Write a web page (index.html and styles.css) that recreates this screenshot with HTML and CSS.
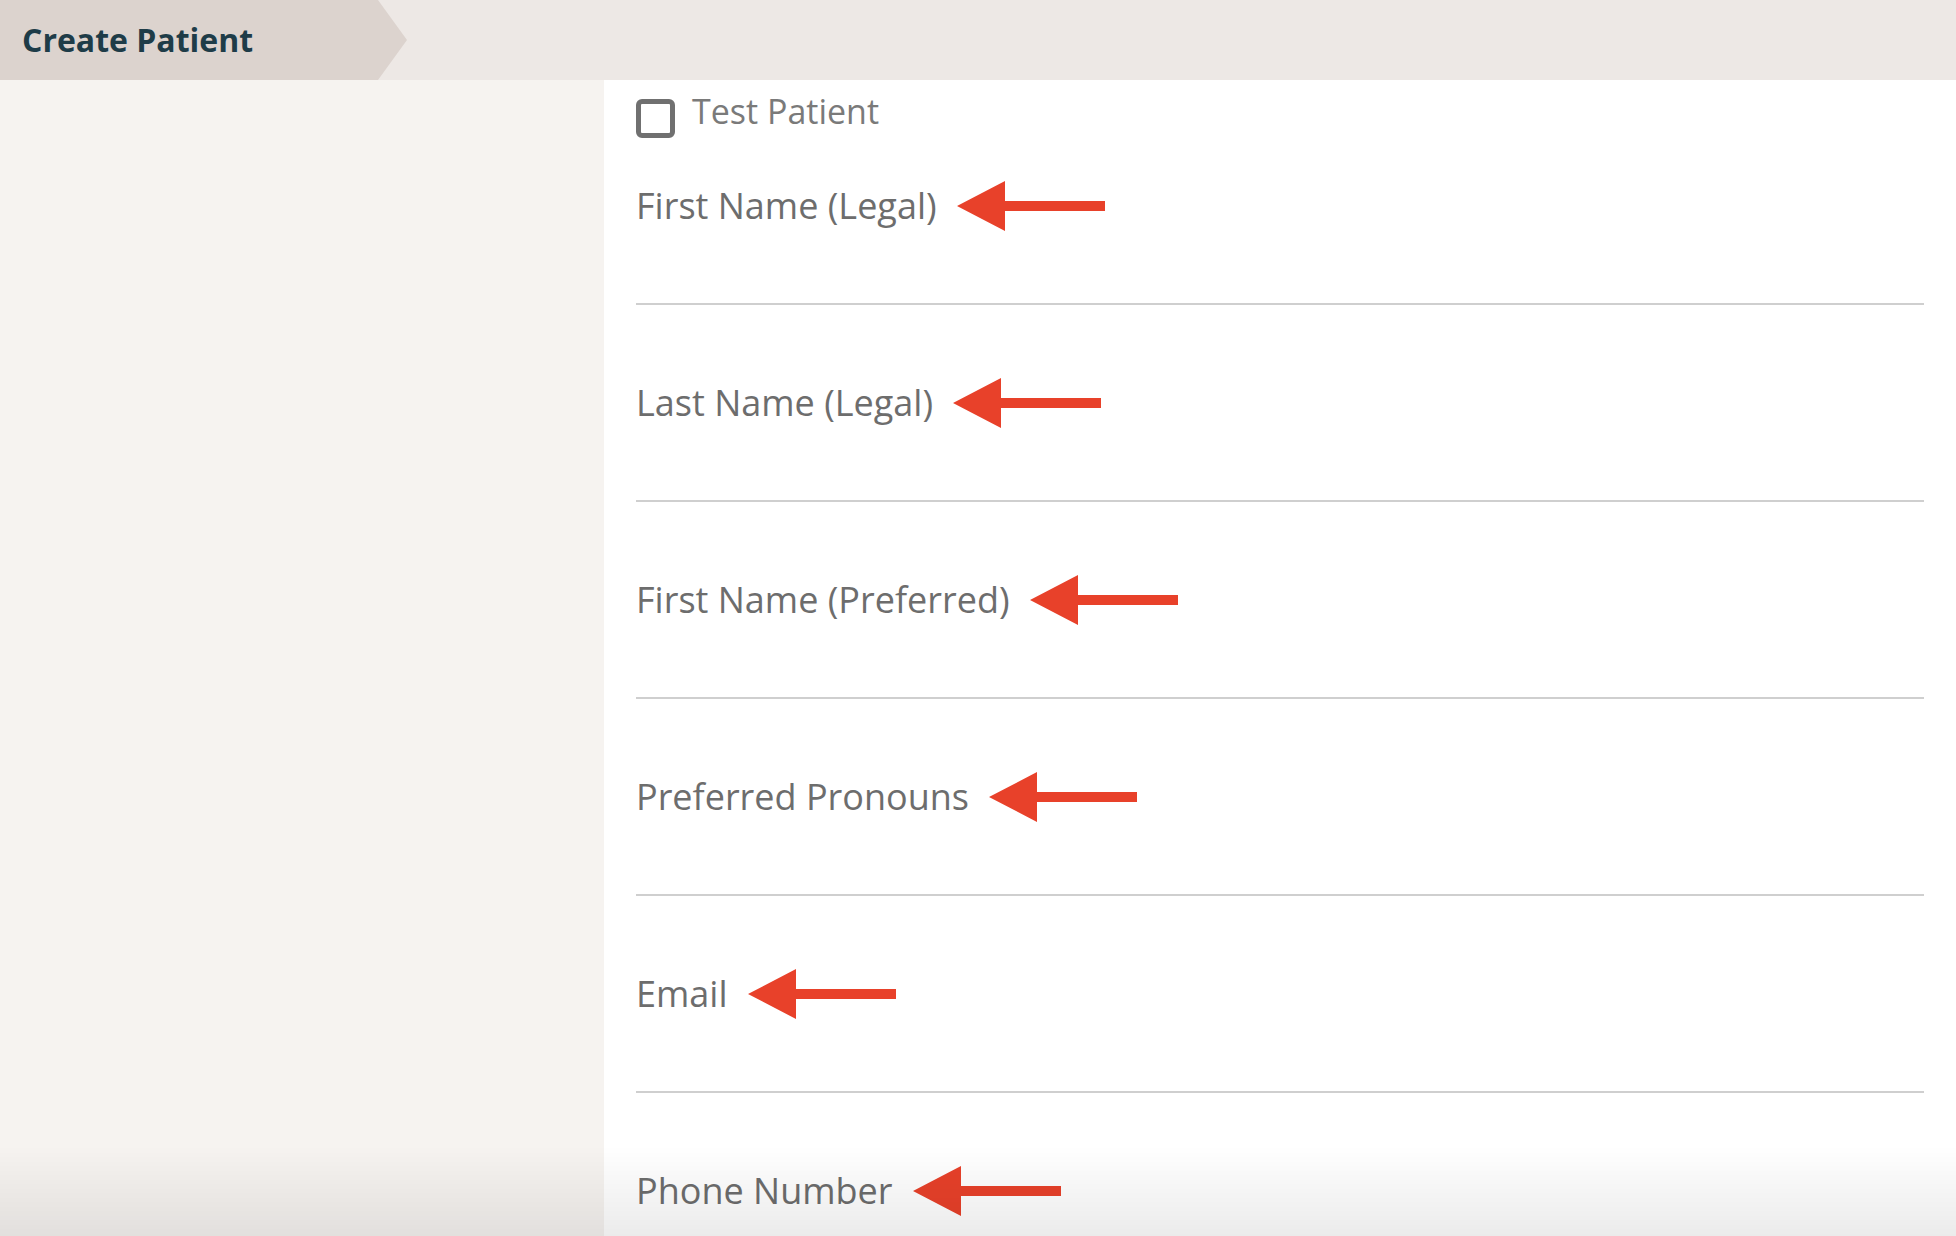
FILE: index.html
```html
<!DOCTYPE html>
<html lang="en">
<head>
    <meta charset="UTF-8">
    <meta name="viewport" content="width=device-width, initial-scale=1.0">
    <title>Create Patient</title>
    <link rel="stylesheet" href="styles.css">
</head>
<body>
    <div class="topbar">
        <div class="crumb">Create Patient</div>
    </div>
    <div class="page">
        <aside class="sidebar"></aside>
        <main class="main">
            <label class="check-row">
                <span class="checkbox"></span>
                <span class="check-text">Test Patient</span>
            </label>
            <div class="field">
                <div class="label">First Name (Legal)
                    <svg class="arrow" width="148" height="50" viewBox="0 0 148 50"><polygon points="0,25 48,0 48,20 148,20 148,30 48,30 48,50"/></svg>
                </div>
                <div class="input"></div>
            </div>
            <div class="field">
                <div class="label">Last Name (Legal)
                    <svg class="arrow" width="148" height="50" viewBox="0 0 148 50"><polygon points="0,25 48,0 48,20 148,20 148,30 48,30 48,50"/></svg>
                </div>
                <div class="input"></div>
            </div>
            <div class="field">
                <div class="label">First Name (Preferred)
                    <svg class="arrow" width="148" height="50" viewBox="0 0 148 50"><polygon points="0,25 48,0 48,20 148,20 148,30 48,30 48,50"/></svg>
                </div>
                <div class="input"></div>
            </div>
            <div class="field">
                <div class="label">Preferred Pronouns
                    <svg class="arrow" width="148" height="50" viewBox="0 0 148 50"><polygon points="0,25 48,0 48,20 148,20 148,30 48,30 48,50"/></svg>
                </div>
                <div class="input"></div>
            </div>
            <div class="field">
                <div class="label">Email
                    <svg class="arrow" width="148" height="50" viewBox="0 0 148 50"><polygon points="0,25 48,0 48,20 148,20 148,30 48,30 48,50"/></svg>
                </div>
                <div class="input"></div>
            </div>
            <div class="field">
                <div class="label">Phone Number
                    <svg class="arrow" width="148" height="50" viewBox="0 0 148 50"><polygon points="0,25 48,0 48,20 148,20 148,30 48,30 48,50"/></svg>
                </div>
                <div class="input"></div>
            </div>
        </main>
    </div>
    <div class="fade"></div>
</body>
</html>
```

FILE: styles.css
```css
html, body {
    margin: 0;
    height: 100%;
    overflow: hidden;
}
body {
    font-family: "Open Sans", "Noto Sans", sans-serif;
    background-color: #fff;
}
.topbar {
    height: 80px;
    background-color: #ede8e5;
}
.crumb {
    width: 385px;
    height: 80px;
    padding-left: 22px;
    line-height: 80px;
    font-size: 32px;
    font-weight: 700;
    color: #1e3c48;
    background-color: #dcd3ce;
    clip-path: polygon(0 0, 378px 0, 100% 50%, 378px 100%, 0 100%);
}
.page {
    display: flex;
    height: calc(100% - 80px);
}
.sidebar {
    width: 604px;
    flex-shrink: 0;
    background-color: #f6f3f0;
}
.main {
    flex: 1;
    padding: 18px 32px 0 32px;
}
.check-row {
    display: flex;
    align-items: flex-start;
    gap: 17px;
}
.checkbox {
    width: 29px;
    height: 29px;
    margin-top: 1px;
    border: 5.5px solid #707070;
    border-radius: 6px;
}
.check-text {
    font-size: 34px;
    line-height: 27px;
    color: #7a7a7a;
}
.field {
    padding-top: 76px;
    border-bottom: 2px solid #cfcfcf;
}
.check-row + .field {
    padding-top: 45.5px;
}
.label {
    display: flex;
    align-items: center;
    height: 44px;
    font-size: 36px;
    line-height: 44px;
    color: #6d6d6d;
}
.arrow {
    margin-left: 20px;
    fill: #e8412a;
}
.input {
    height: 75px;
}
.fade {
    position: fixed;
    left: 0;
    right: 0;
    bottom: 0;
    height: 90px;
    background: linear-gradient(to bottom, rgba(0, 0, 0, 0), rgba(0, 0, 0, 0.08));
    pointer-events: none;
}
```
